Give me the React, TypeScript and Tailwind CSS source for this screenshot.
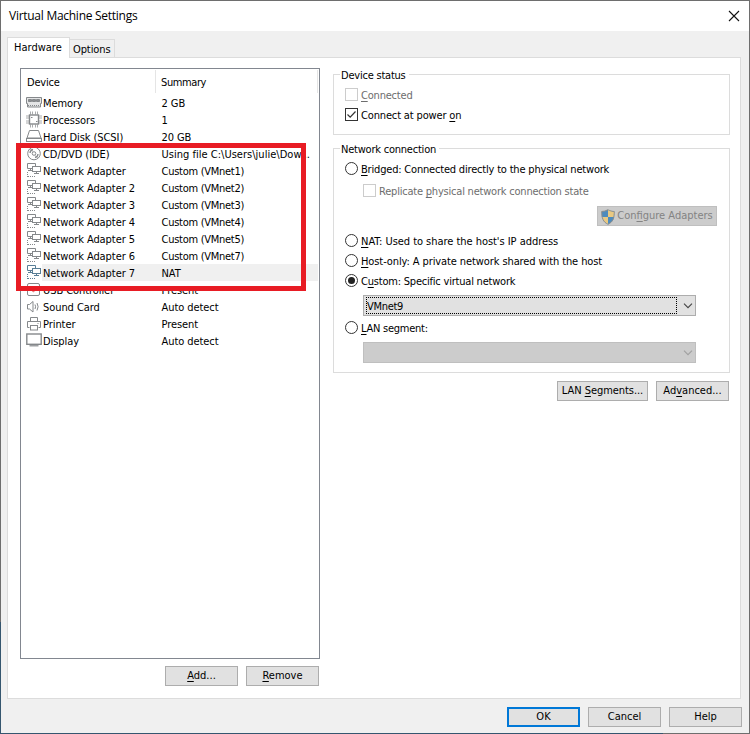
import type { ReactNode } from 'react'
import { clsx } from 'clsx'

type IconName = 'memory' | 'cpu' | 'disk' | 'cd' | 'network' | 'usb' | 'sound' | 'printer' | 'display'

interface Device {
  icon: IconName
  name: string
  summary: string
}

const devices: Device[] = [
  { icon: 'memory', name: 'Memory', summary: '2 GB' },
  { icon: 'cpu', name: 'Processors', summary: '1' },
  { icon: 'disk', name: 'Hard Disk (SCSI)', summary: '20 GB' },
  { icon: 'cd', name: 'CD/DVD (IDE)', summary: 'Using file C:\\Users\\julie\\Dow...' },
  { icon: 'network', name: 'Network Adapter', summary: 'Custom (VMnet1)' },
  { icon: 'network', name: 'Network Adapter 2', summary: 'Custom (VMnet2)' },
  { icon: 'network', name: 'Network Adapter 3', summary: 'Custom (VMnet3)' },
  { icon: 'network', name: 'Network Adapter 4', summary: 'Custom (VMnet4)' },
  { icon: 'network', name: 'Network Adapter 5', summary: 'Custom (VMnet5)' },
  { icon: 'network', name: 'Network Adapter 6', summary: 'Custom (VMnet7)' },
  { icon: 'network', name: 'Network Adapter 7', summary: 'NAT' },
  { icon: 'usb', name: 'USB Controller', summary: 'Present' },
  { icon: 'sound', name: 'Sound Card', summary: 'Auto detect' },
  { icon: 'printer', name: 'Printer', summary: 'Present' },
  { icon: 'display', name: 'Display', summary: 'Auto detect' },
]

const selected = 10

const iconShapes: Record<IconName, ReactNode> = {
  memory: (
    <>
      <path d="M.5 3.5h15v6h-1v3.5h-13V9.5h-1z" fill="#e4e5e6" />
      <path d="M2.5 5.5h3v2h-3zM6.5 5.5h3v2h-3zM10.5 5.5h3v2h-3z" fill="#8c8f92" />
      <path d="M2 11.5h12" strokeDasharray="1 1" />
    </>
  ),
  cpu: (
    <>
      <rect x="3.5" y="4" width="9" height="9" strokeWidth="1.4" />
      <path
        d="M4.5.5v3M6.5.5v3M9.5.5v3M11.5.5v3M4.5 13.5v3M6.5 13.5v3M9.5 13.5v3M11.5 13.5v3M0 5h3M0 7h3M0 10h3M0 12h3M13 5h3M13 7h3M13 10h3M13 12h3"
        strokeWidth=".7"
      />
      <path d="M5 6.5h1.5M10 10.5h1.5" />
    </>
  ),
  disk: (
    <>
      <path d="M3.5 2.5h9l2.5 7.5H1z" />
      <rect x=".5" y="10.5" width="15" height="3" />
    </>
  ),
  cd: (
    <>
      <circle cx="8" cy="8.5" r="6.3" />
      <circle cx="8" cy="8.5" r="1.8" />
      <path d="M4 8a4 4 0 0 1 3-3.5M12 9a4 4 0 0 1-3 3.5" strokeWidth="1.3" />
      <path d="M4.5 4l2 2.5M9.5 10.5l2 2.5" strokeWidth=".7" />
    </>
  ),
  network: (
    <>
      <path d="M6 6.5H1.5v-5h8v3M4.5 6.5v2M2 8.5h4.5" />
      <rect x="6.5" y="4.5" width="8" height="5" fill="#fff" />
      <path d="M10.5 9.5v2M8 11.5h5" />
      <path d="M1.5 10v5M2 14.5h8" strokeDasharray="1 1" />
    </>
  ),
  usb: (
    <>
      <rect x="1.5" y="2.5" width="12" height="12" rx="1.5" />
      <path d="M7.5 5v6M5.5 7.5v2l2 1.5 2-2v-2" stroke="#e48686" />
    </>
  ),
  sound: (
    <>
      <path d="M1.5 6.5h2l3.5-3v10.5l-3.5-3h-2z" />
      <path d="M9 6.5q1.2 2.2 0 4.5M11 5q2.2 3.7 0 7.5" />
    </>
  ),
  printer: (
    <>
      <path d="M4.5 6.5v-4h7v4M3.5 12.5h-2v-6h13v6h-2" />
      <rect x="4.5" y="10.5" width="7" height="4.5" />
      <path d="M11.5 8.5h1" />
    </>
  ),
  display: (
    <>
      <rect x=".8" y="2" width="14.4" height="10.3" strokeWidth="1.4" />
      <path d="M3.5 13.8h9" strokeWidth="1.2" />
    </>
  ),
}

function DeviceIcon({ name, active }: { name: IconName; active?: boolean }) {
  return (
    <svg viewBox="0 0 16 17" className="h-[17px] w-4 shrink-0" fill="none" stroke={active ? '#587e96' : '#85888b'}>
      {iconShapes[name]}
    </svg>
  )
}

// Underlined accelerator key inside a label
function Key({ children }: { children: ReactNode }) {
  return <span className="underline decoration-1 underline-offset-2">{children}</span>
}

function Button({ children, className }: { children: ReactNode; className?: string }) {
  return (
    <button
      className={clsx(
        'flex h-5 shrink-0 items-center justify-center border border-[#adadad] bg-[#e1e1e1] pt-px whitespace-nowrap',
        className ?? 'w-[73px]'
      )}
    >
      {children}
    </button>
  )
}

interface OptionProps {
  children: ReactNode
  checked?: boolean
  disabled?: boolean
  className?: string
}

function Checkbox({ children, checked, disabled, className }: OptionProps) {
  return (
    <label
      className={clsx('flex h-[13px] items-center gap-[3px] whitespace-nowrap', disabled && 'text-[#6d6d6d]', className)}
    >
      <span className={clsx('h-[13px] w-[13px] shrink-0 border', disabled ? 'border-[#cccccc]' : 'border-[#333333]')}>
        {checked && (
          <svg viewBox="0 0 11 11" className="block h-[11px] w-[11px]" fill="none" stroke="#333" strokeWidth="1.2">
            <path d="M1.5 5.5l2.7 2.7 5.3-5.7" />
          </svg>
        )}
      </span>
      <span className="pt-1">{children}</span>
    </label>
  )
}

function Radio({ children, checked, className }: OptionProps) {
  return (
    <label className={clsx('flex h-[13px] items-center gap-[3px] whitespace-nowrap', className)}>
      <span className="flex h-[13px] w-[13px] shrink-0 items-center justify-center rounded-full border border-[#333333]">
        {checked && <span className="h-[7px] w-[7px] rounded-full bg-[#222222]" />}
      </span>
      <span className="pt-1">{children}</span>
    </label>
  )
}

function Select({ value, disabled }: { value?: string; disabled?: boolean }) {
  return (
    <div
      className={clsx(
        'ml-[18px] flex h-[21px] w-[333px] items-center border p-0.5',
        disabled ? 'border-[#bfbfbf] bg-[#cccccc] text-[#a0a0a0]' : 'border-[#adadad] bg-[#e1e1e1] text-[#444444]'
      )}
    >
      <div
        className={clsx(
          'flex h-[17px] w-[311px] items-center pt-[3px] tracking-[-0.3px] text-black',
          !disabled && 'border border-dotted border-black'
        )}
      >
        {value}
      </div>
      <svg viewBox="0 0 10 6" className="ml-[6px] h-1.5 w-2.5" fill="none" stroke="currentColor" strokeWidth="1.1">
        <path d="M1 .7l4 4 4-4" />
      </svg>
    </div>
  )
}

interface GroupProps {
  title: string
  titleWidth: string
  className: string
  children: ReactNode
}

function Group({ title, titleWidth, className, children }: GroupProps) {
  return (
    <section className={clsx('w-[397px] border border-[#dcdcdc] pl-[11px]', className)}>
      <h2
        className={clsx(
          '-mt-2 -ml-[5px] h-4 bg-white pl-px leading-[17px] tracking-[-0.22px] whitespace-nowrap',
          titleWidth
        )}
      >
        {title}
      </h2>
      {children}
    </section>
  )
}

function Shield() {
  return (
    <svg viewBox="0 0 14 16" className="h-4 w-3.5 shrink-0">
      <path d="M7 .7Q4 2.5.7 2.5C.7 9 2 13 7 15.3 12 13 13.3 9 13.3 2.5 10 2.5 7 .7 7 .7z" fill="#e9c982" />
      <path d="M7 .7Q4 2.5.7 2.5L.9 8H7zM7 8v7.3C11 13.5 12.6 11 13.1 8z" fill="#4e8bbd" />
      <path
        d="M7 .7Q4 2.5.7 2.5C.7 9 2 13 7 15.3 12 13 13.3 9 13.3 2.5 10 2.5 7 .7 7 .7z"
        fill="none"
        stroke="#898e90"
      />
    </svg>
  )
}

function DeviceList() {
  return (
    <div className="h-[591px] w-[300px] border border-[#828790] bg-white">
      <div className="flex h-[25px] pt-px">
        <div className="flex h-[23px] w-[135px] items-center border-r border-[#e5e5e5] pt-1 pl-[6px] tracking-[-0.2px]">
          Device
        </div>
        <div className="flex h-[23px] w-[162px] items-center border-r border-[#e5e5e5] pt-1 pl-[5px] tracking-[-0.4px]">
          Summary
        </div>
      </div>
      {devices.map((device, i) => (
        <div key={device.name} className="flex h-[17px] pl-[5px] leading-[19px] whitespace-nowrap">
          <DeviceIcon name={device.icon} active={i === selected} />
          <div className={clsx('flex w-[276px] pl-px tracking-[-0.07px]', i === selected && 'bg-[#f0f0f0]')}>
            <span className="w-[118.5px] shrink-0">{device.name}</span>
            <span
              className={clsx(
                device.summary.startsWith('Custom') && 'tracking-[-0.27px]',
                device.icon === 'cd' && 'tracking-[0.02px]'
              )}
            >
              {device.summary}
            </span>
          </div>
        </div>
      ))}
    </div>
  )
}

export default function App() {
  return (
    <div className="relative flex h-[734px] w-[750px] flex-col border border-[#6e6e6e] bg-[#f0f0f0] font-['DejaVu_Sans_Condensed','DejaVu_Sans',sans-serif] text-[11px] text-black [font-stretch:condensed]">
      <header className="flex h-[30px] shrink-0 items-center justify-between bg-white pr-[9px] pl-2">
        <h1 className="font-['Open_Sans',sans-serif] text-[12px] tracking-[-0.27px] [font-stretch:normal]">
          Virtual Machine Settings
        </h1>
        <svg viewBox="0 0 12 12" className="h-3 w-3" fill="none" stroke="#111" strokeWidth="1.1">
          <path d="M1 1l10 10M11 1L1 11" />
        </svg>
      </header>

      <nav className="z-10 mt-[6px] -mb-px ml-[6px] flex h-[21px] shrink-0 items-end">
        <div className="h-[21px] w-[63px] border border-b-0 border-[#dcdcdc] bg-white pl-[6px] leading-[19px]">
          Hardware
        </div>
        <div className="h-[19px] w-[45px] border border-l-0 border-[#dcdcdc] pl-[3px] leading-[19px] tracking-[-0.1px]">
          Options
        </div>
      </nav>

      <main className="ml-[6px] flex h-[642px] w-[734px] shrink-0 gap-[13px] border border-[#dcdcdc] bg-white pt-[10px] pl-3">
        <div>
          <DeviceList />
          <div className="mt-[7px] flex justify-end gap-2 pr-px">
            <Button><span><Key>A</Key>dd...</span></Button>
            <Button><span><Key>R</Key>emove</span></Button>
          </div>
        </div>

        <div className="pt-[6px]">
          <Group title="Device status" titleWidth="w-[69px]" className="h-[61px]">
            <div className="mt-[5px] flex flex-col gap-[7px]">
              <Checkbox disabled className="tracking-[-0.2px]"><Key>C</Key>onnected</Checkbox>
              <Checkbox checked className="tracking-[-0.15px]">Connect at power <Key>o</Key>n</Checkbox>
            </div>
          </Group>

          <Group title="Network connection" titleWidth="w-[99px]" className="mt-[13px] h-[225px]">
            <div className="mt-[5px]">
              <Radio className="tracking-[-0.19px]">
                <Key>B</Key>ridged: Connected directly to the physical network
              </Radio>
              <div className="mt-[9px] ml-[18px]">
                <Checkbox disabled className="tracking-[-0.21px]">
                  Replicate <Key>p</Key>hysical network connection state
                </Checkbox>
              </div>
              <div className="mt-[9px] flex justify-end pr-3">
                <Button className="w-[120px] !border-[#bfbfbf] !bg-[#cccccc] text-[#838383]">
                  <Shield />
                  <span className="ml-0.5">Con<Key>f</Key>igure Adapters</span>
                </Button>
              </div>
              <div className="mt-2 flex flex-col gap-[7px]">
                <Radio className="tracking-[-0.04px]"><Key>N</Key>AT: Used to share the host's IP address</Radio>
                <Radio className="tracking-[-0.1px]">
                  <Key>H</Key>ost-only: A private network shared with the host
                </Radio>
                <Radio checked className="tracking-[-0.21px]">C<Key>u</Key>stom: Specific virtual network</Radio>
              </div>
              <div className="mt-2 mb-[5px]"><Select value="VMnet9" /></div>
              <Radio className="tracking-[-0.25px]"><Key>L</Key>AN segment:</Radio>
              <div className="mt-2"><Select disabled /></div>
            </div>
          </Group>

          <div className="mt-2 flex justify-end gap-2 pr-px">
            <Button className="w-[91px] tracking-[-0.05px]"><span>LAN <Key>S</Key>egments...</span></Button>
            <Button><span>Ad<Key>v</Key>anced...</span></Button>
          </div>
        </div>
      </main>

      <footer className="mt-2 flex justify-end gap-2 pr-[7px]">
        <Button className="w-[73px] !border-2 !border-[#0078d7]">OK</Button>
        <Button>Cancel</Button>
        <Button>Help</Button>
      </footer>

      {/* Desktop showing along the lower left edge of the window */}
      <div className="absolute -bottom-px -left-px h-[112px] w-[663px] border-b border-l border-[#35566f]" />

      {/* Callout around the network adapters */}
      <div className="absolute top-[142px] left-[15px] h-[148px] w-[290px] border-[5px] border-[#e81c24]" />
    </div>
  )
}
